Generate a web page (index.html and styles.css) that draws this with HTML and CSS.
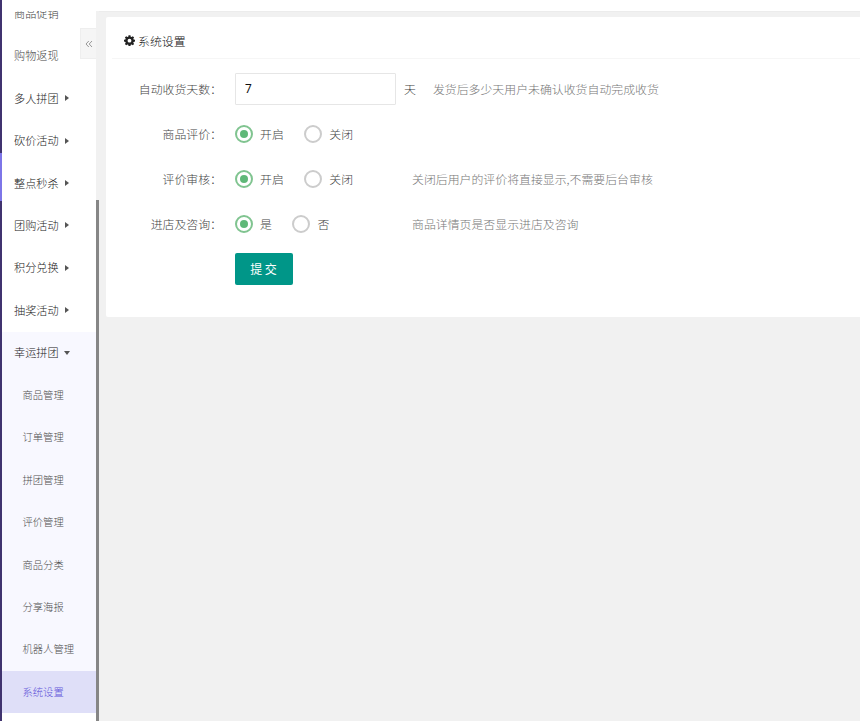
FILE: index.html
```html
<!DOCTYPE html>
<html lang="zh-CN">
<head>
<meta charset="utf-8">
<title>系统设置</title>
<link rel="stylesheet" href="styles.css">
</head>
<body>
<div class="app">
  <div class="rail"><span class="rail-active"></span></div>
  <div class="workspace">
    <header class="topbar"></header>
    <div class="body">
      <aside class="sidebar">
        <nav class="menu">
          <a class="item plain">商品促销</a>
          <a class="item plain">购物返现</a>
          <a class="item">多人拼团<i class="caret"></i></a>
          <a class="item">砍价活动<i class="caret"></i></a>
          <a class="item">整点秒杀<i class="caret"></i></a>
          <a class="item">团购活动<i class="caret"></i></a>
          <a class="item">积分兑换<i class="caret"></i></a>
          <a class="item">抽奖活动<i class="caret"></i></a>
          <div class="group">
            <a class="item">幸运拼团<i class="caret open"></i></a>
            <a class="item sub">商品管理</a>
            <a class="item sub">订单管理</a>
            <a class="item sub">拼团管理</a>
            <a class="item sub">评价管理</a>
            <a class="item sub">商品分类</a>
            <a class="item sub">分享海报</a>
            <a class="item sub">机器人管理</a>
            <a class="item sub active">系统设置</a>
          </div>
        </nav>
        <button class="collapse" aria-label="收起">
          <svg width="8" height="8" viewBox="0 0 8 8"><path d="M3.8 1 1 4l2.8 3M7 1 4.2 4 7 7"/></svg>
        </button>
      </aside>
      <div class="scroll"><span class="thumb"></span></div>
      <main class="content">
        <section class="card">
          <h1 class="title">
            <svg class="gear" viewBox="0 0 16 16"><path fill-rule="evenodd" d="M6.6 .4h2.8l.4 2 1.3.5 1.7-1.2 1.9 1.9-1.2 1.7.5 1.3 2 .4v2.6l-2 .4-.5 1.3 1.2 1.7-1.9 1.9-1.7-1.2-1.3.5-.4 1.9H6.6l-.4-1.9-1.3-.5-1.7 1.2L1.300 13l1.200-1.700L2 10l-2-.4V7l2-.4.5-1.300L1.300 3.600l1.900-1.900 1.700 1.200 1.300-.5zM8 5.400a2.800 2.800 0 1 0 0 5.600 2.800 2.800 0 0 0 0-5.600z"/></svg>
            <span>系统设置</span>
          </h1>
          <form class="form">
            <div class="row">
              <label class="label">自动收货天数：</label>
              <input class="input" type="text" value="7">
              <span class="unit">天</span>
              <span class="hint">发货后多少天用户未确认收货自动完成收货</span>
            </div>
            <div class="row">
              <span class="label">商品评价：</span>
              <div class="choices">
                <span class="radio on"><i></i>开启</span>
                <span class="radio"><i></i>关闭</span>
              </div>
            </div>
            <div class="row">
              <span class="label">评价审核：</span>
              <div class="choices">
                <span class="radio on"><i></i>开启</span>
                <span class="radio"><i></i>关闭</span>
              </div>
              <span class="hint">关闭后用户的评价将直接显示,不需要后台审核</span>
            </div>
            <div class="row">
              <span class="label">进店及咨询：</span>
              <div class="choices">
                <span class="radio on"><i></i>是</span>
                <span class="radio"><i></i>否</span>
              </div>
              <span class="hint">商品详情页是否显示进店及咨询</span>
            </div>
            <div class="row">
              <span class="label"></span>
              <button class="submit" type="button">提 交</button>
            </div>
          </form>
        </section>
      </main>
    </div>
  </div>
</div>
</body>
</html>
```
FILE: styles.css
```css
* { box-sizing: border-box; }
body {
  margin: 0;
  font-family: "Noto Sans CJK SC", sans-serif;
  font-weight: 300;
  font-size: 11.9px;
  color: #444;
}
.app { display: flex; height: 721px; overflow: hidden; background: #f1f1f1; }
.rail { width: 2px; flex: none; background: #40336f; padding-top: 153px; }
.rail-active { display: block; height: 48px; background: #7d75e8; }
.workspace { flex: 1; min-width: 0; display: flex; flex-direction: column; }
.topbar { height: 11px; flex: none; background: #fff; }
.body { flex: 1; min-height: 0; display: flex; }

.sidebar { position: relative; width: 94px; flex: none; background: #fff; overflow: hidden; }
.menu { margin-top: -18.4px; }
.item {
  display: flex;
  align-items: center;
  height: 42.4px;
  padding: 0 0 1.6px 12px;
  font-size: 11.15px;
  color: #222;
  white-space: nowrap;
}
.item.plain { color: #444; }
.item.sub { padding-left: 20.5px; font-size: 10.3px; color: #505050; }
.item.active { background: #dfdff8; color: #6357da; }
.group { background: #f8f8ff; }
.caret {
  margin: 1px 0 0 6.4px;
  border-left: 4px solid #555;
  border-top: 3px solid transparent;
  border-bottom: 3px solid transparent;
}
.caret.open {
  margin-left: 5px;
  border: 3.5px solid transparent;
  border-top: 4px solid #555;
  border-bottom: 0;
}
.collapse {
  position: absolute;
  right: 0;
  top: 17px;
  width: 16px;
  height: 31px;
  padding: 0;
  border: 1px solid #eee;
  border-right: 0;
  background: #f5f5f5;
  display: flex;
  align-items: center;
  justify-content: center;
}
.collapse svg { fill: none; stroke: #999; stroke-width: 1; }

.scroll { width: 3px; flex: none; padding-top: 189px; }
.thumb { display: block; height: 521px; background: #868686; }

.content { flex: 1; min-width: 0; padding: 5px 0 0 7px; border-top: 1px solid #ececec; }
.card { height: 300px; background: #fff; border-radius: 2px 0 0 2px; }
.title {
  display: flex;
  align-items: center;
  gap: 3px;
  height: 42px;
  margin: 0 0 0 6px;
  padding: 6px 0 0 12px;
  border-bottom: 1px solid #f6f6f6;
  font-size: 11.9px;
  font-weight: 300;
  color: #111;
}
.title span { padding-bottom: 1px; }
.gear { width: 11px; height: 11px; fill: #222; }
.form { display: flex; flex-direction: column; gap: 13px; padding-top: 14px; }
.row { display: flex; align-items: center; height: 32px; white-space: nowrap; }
.label { width: 116px; margin-right: 13px; padding-bottom: 2px; text-align: right; flex: none; }
.input {
  width: 161px;
  height: 32px;
  padding: 0 9px;
  border: 1px solid #e6e6e6;
  border-radius: 1px;
  font: 400 12px Roboto, sans-serif;
  color: #111;
}
.unit { margin: 0 17px 0 8px; padding-bottom: 2px; }
.hint { padding-bottom: 2px; color: #777; }
.choices { width: 177px; display: flex; gap: 20.5px; }
.radio { display: flex; align-items: center; gap: 7px; height: 18px; line-height: 16px; }
.radio i {
  display: flex;
  width: 18px;
  height: 18px;
  border: 2px solid #ccc;
  border-radius: 50%;
}
.radio.on i { border-color: #80c490; align-items: center; justify-content: center; }
.radio.on i::after { content: ""; width: 8px; height: 8px; border-radius: 50%; background: #5fb878; }
.submit {
  width: 58px;
  height: 32px;
  padding: 0 1px 2px 0;
  border: 0;
  border-radius: 2px;
  background: #009688;
  color: #fff;
  font: 400 12px "Noto Sans CJK SC", sans-serif;
}
```
